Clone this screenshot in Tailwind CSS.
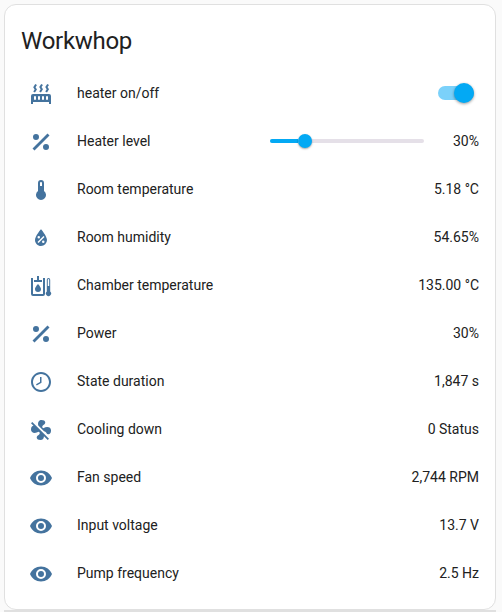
<!DOCTYPE html>
<html lang="en">
<head>
<meta charset="utf-8">
<title>Workwhop</title>
<script src="https://cdn.jsdelivr.net/npm/@tailwindcss/browser@4"></script>
</head>
<body class="h-[612px] overflow-hidden bg-[#fafafa] pt-1 pl-1 font-[Roboto,sans-serif] text-sm leading-5 text-[#212121]">
<main class="h-[606px] w-[492px] rounded-xl border border-[#e0e0e0] bg-white pt-4 pr-4 pl-4">
  <h1 class="mb-1 h-11 text-2xl leading-10 tracking-[-0.012em]">Workwhop</h1>
  <ul class="[&_li]:flex [&_li]:h-12 [&_li]:items-center [&_svg]:mt-0.5 [&_svg]:mr-6 [&_svg]:ml-2 [&_svg]:size-6 [&_svg]:shrink-0 [&_svg]:fill-[#44739e] [&_b]:ml-auto [&_b]:font-normal">
    <li><svg viewBox="0 0 24 24"><path d="M7.95,3L6.53,5.19L7.95,7.4H7.94L5.95,10.5L4.22,9.6L5.64,7.39L4.22,5.19L6.22,2.09L7.95,3M13.95,2.89L12.53,5.1L13.95,7.3L13.94,7.31L11.95,10.4L10.22,9.5L11.64,7.3L10.22,5.1L12.22,2L13.95,2.89M20,2.89L18.56,5.1L20,7.3V7.31L18,10.4L16.25,9.5L17.67,7.3L16.25,5.1L18.25,2L20,2.89M2,22V14A2,2 0 0,1 4,12H20A2,2 0 0,1 22,14V22H20V20H4V22H2M6,14A1,1 0 0,0 5,15V17A1,1 0 0,0 7,17V15A1,1 0 0,0 6,14M10,14A1,1 0 0,0 9,15V17A1,1 0 0,0 11,17V15A1,1 0 0,0 10,14M14,14A1,1 0 0,0 13,15V17A1,1 0 0,0 15,17V15A1,1 0 0,0 14,14M18,14A1,1 0 0,0 17,15V17A1,1 0 0,0 19,17V15A1,1 0 0,0 18,14Z"/></svg>
      <span>heater on/off</span>
      <div class="mr-[5px] ml-auto flex h-3.5 w-9 items-center justify-end rounded-full bg-[#7bd1fa]"><i class="size-5 shrink-0 rounded-full bg-[#03a9f4] shadow-[0_1px_3px_rgba(0,0,0,0.4)]"></i></div></li>
    <li><svg viewBox="0 0 24 24"><path d="M18.5,3.5L3.5,18.5L5.5,20.5L20.5,5.5M7,4A3,3 0 0,0 7,10A3,3 0 0,0 7,4M17,14A3,3 0 0,0 17,20A3,3 0 0,0 17,14Z"/></svg>
      <span>Heater level</span>
      <div class="ml-auto flex h-1 w-[154px] items-center rounded-full bg-[#e5e0e8]"><i class="h-1 w-7 rounded-l-full bg-[#03a9f4]"></i><i class="size-3.5 shrink-0 rounded-full bg-[#03a9f4] shadow-[0_1px_2px_rgba(0,0,0,0.35)]"></i></div>
      <span class="w-[55px] text-right">30%</span></li>
    <li><svg viewBox="0 0 24 24"><path d="M15 13V5A3 3 0 0 0 9 5V13A5 5 0 1 0 15 13M12 4A1 1 0 0 1 13 5V8H11V5A1 1 0 0 1 12 4Z"/></svg><span>Room temperature</span><b>5.18 °C</b></li>
    <li><svg viewBox="0 0 24 24"><path d="M12,3.25C12,3.25 6,10 6,14C6,17.32 8.69,20 12,20A6,6 0 0,0 18,14C18,10 12,3.25 12,3.25M14.47,9.97L15.53,11.03L9.53,17.03L8.47,15.97M9.75,10A1.25,1.25 0 0,1 9.75,12.5A1.25,1.25 0 0,1 9.75,10M14.25,14.5A1.25,1.25 0 0,1 14.25,17A1.25,1.25 0 0,1 14.25,14.5Z"/></svg><span>Room humidity</span><b>54.65%</b></li>
    <li><svg viewBox="0 0 24 24"><path d="M2 4H4V20H14V4H16V20A2 2 0 0 1 14 22H4A2 2 0 0 1 2 20ZM8 2H10V6H13V8H5V6H8ZM9 10C9 10 6 13.2 6 15A3 3 0 0 0 12 15C12 13.2 9 10 9 10ZM21.2 17.5V5.7A1.7 1.7 0 0 0 17.8 5.7V17.5A2.6 2.6 0 1 0 21.2 17.5M19.5 5A.7 .7 0 0 1 20.2 5.7V12H18.8V5.7A.7 .7 0 0 1 19.5 5Z"/></svg><span>Chamber temperature</span><b>135.00 °C</b></li>
    <li><svg viewBox="0 0 24 24"><path d="M18.5,3.5L3.5,18.5L5.5,20.5L20.5,5.5M7,4A3,3 0 0,0 7,10A3,3 0 0,0 7,4M17,14A3,3 0 0,0 17,20A3,3 0 0,0 17,14Z"/></svg><span>Power</span><b>30%</b></li>
    <li><svg viewBox="0 0 24 24"><path d="M12 20C16.4 20 20 16.4 20 12S16.4 4 12 4 4 7.6 4 12 7.6 20 12 20M12 2C17.5 2 22 6.5 22 12S17.5 22 12 22 2 17.5 2 12 6.5 2 12 2M12.5 12.8L7.7 15.6L7 14.2L11 11.9V7H12.5V12.8Z"/></svg><span>State duration</span><b>1,847 s</b></li>
    <li><svg viewBox="0 0 24 24"><path d="M12.5,2C9.64,2 8.57,4.55 9.29,7.47L15,13.16C15.87,13.37 16.81,13.81 17.28,14.73C18.46,17.1 22.03,17 22.03,12.5C22.03,8.92 18.05,8.13 14.35,10.13C14.03,9.73 13.61,9.42 13.13,9.22C13.32,8.29 13.76,7.24 14.75,6.75C17.11,5.57 17,2 12.5,2M3.28,4L2,5.27L4.47,7.73C3.22,7.74 2,8.87 2,11.5C2,15.07 5.96,15.85 9.65,13.87C9.97,14.27 10.4,14.59 10.89,14.79C10.69,15.71 10.25,16.75 9.27,17.24C6.91,18.42 7,22 11.5,22C13.8,22 14.94,20.36 14.94,18.21L18.73,22L20,20.72L3.28,4Z"/></svg><span>Cooling down</span><b>0 Status</b></li>
    <li><svg viewBox="0 0 24 24"><path d="M12,9A3,3 0 0,0 12,15A3,3 0 0,0 12,9M12,17A5,5 0 0,1 12,7A5,5 0 0,1 12,17M12,4.5C7,4.5 2.73,7.61 1,12C2.73,16.39 7,19.5 12,19.5C17,19.5 21.27,16.39 23,12C21.27,7.61 17,4.5 12,4.5Z"/></svg><span>Fan speed</span><b>2,744 RPM</b></li>
    <li><svg viewBox="0 0 24 24"><path d="M12,9A3,3 0 0,0 12,15A3,3 0 0,0 12,9M12,17A5,5 0 0,1 12,7A5,5 0 0,1 12,17M12,4.5C7,4.5 2.73,7.61 1,12C2.73,16.39 7,19.5 12,19.5C17,19.5 21.27,16.39 23,12C21.27,7.61 17,4.5 12,4.5Z"/></svg><span>Input voltage</span><b>13.7 V</b></li>
    <li><svg viewBox="0 0 24 24"><path d="M12,9A3,3 0 0,0 12,15A3,3 0 0,0 12,9M12,17A5,5 0 0,1 12,7A5,5 0 0,1 12,17M12,4.5C7,4.5 2.73,7.61 1,12C2.73,16.39 7,19.5 12,19.5C17,19.5 21.27,16.39 23,12C21.27,7.61 17,4.5 12,4.5Z"/></svg><span>Pump frequency</span><b>2.5 Hz</b></li>
  </ul>
</main>
<div class="h-0.5 w-[492px] bg-[#e0e0e0]"></div>
</body>
</html>
